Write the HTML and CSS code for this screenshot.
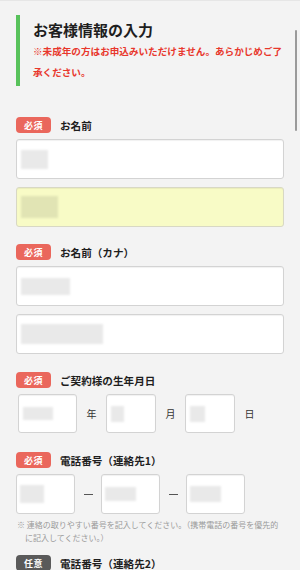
FILE: index.html
```html
<!DOCTYPE html>
<html lang="ja">
<head>
<meta charset="utf-8">
<link rel="stylesheet" href="styles.css">
</head>
<body>
<div class="page">
  <div class="intro">
    <h1 class="title">お客様情報の入力</h1>
    <p class="warn">※未成年の方はお申込みいただけません。あらかじめご了承ください。</p>
  </div>

  <div class="field field-first">
    <div class="field-head"><span class="badge">必須</span><span class="label">お名前</span></div>
    <div class="input"><span class="blur" style="width:27px;height:19px"></span></div>
    <div class="input input-filled"><span class="blur blur-yellow" style="width:37px;height:22px"></span></div>
  </div>

  <div class="field">
    <div class="field-head"><span class="badge">必須</span><span class="label">お名前（カナ）</span></div>
    <div class="input"><span class="blur" style="width:49px;height:17px"></span></div>
    <div class="input"><span class="blur" style="width:82px;height:20px"></span></div>
  </div>

  <div class="field field-date">
    <div class="field-head"><span class="badge">必須</span><span class="label">ご契約様の生年月日</span></div>
    <div class="row date-row">
      <div class="input box box-year"><span class="blur" style="width:30px;height:13px"></span></div>
      <span class="unit">年</span>
      <div class="input box box-md"><span class="blur" style="width:13px;height:16px"></span></div>
      <span class="unit">月</span>
      <div class="input box box-md"><span class="blur" style="width:15px;height:16px"></span></div>
      <span class="unit">日</span>
    </div>
  </div>

  <div class="field field-tel">
    <div class="field-head"><span class="badge">必須</span><span class="label">電話番号（連絡先1）</span></div>
    <div class="row tel-row">
      <div class="input box box-tel"><span class="blur" style="width:24px;height:18px"></span></div>
      <span class="dash"></span>
      <div class="input box box-tel"><span class="blur" style="width:31px;height:14px"></span></div>
      <span class="dash"></span>
      <div class="input box box-tel"><span class="blur" style="width:31px;height:16px"></span></div>
    </div>
    <p class="note">※ 連絡の取りやすい番号を記入してください。（携帯電話の番号を優先的に記入してください。）</p>
  </div>

  <div class="field field-last">
    <div class="field-head"><span class="badge badge-optional">任意</span><span class="label">電話番号（連絡先2）</span></div>
    <div class="row tel-row">
      <div class="input box box-tel"></div>
      <span class="dash"></span>
      <div class="input box box-tel"></div>
      <span class="dash"></span>
      <div class="input box box-tel"></div>
    </div>
  </div>
</div>
<div class="scrollbar"></div>
</body>
</html>
```

FILE: styles.css
```css
html, body {
  margin: 0;
  padding: 0;
}
body {
  background: #f3f3f3;
  font-family: "Noto Sans CJK JP", "Noto Sans", sans-serif;
  color: #222;
  border-top: 1px solid #e6e6e6;
}
.page {
  padding: 14px 16px 40px 16px;
}
.intro {
  border-left: 4px solid #58c25b;
  padding: 4px 0 3px 13px;
}
.title {
  margin: 0;
  font-size: 15px;
  line-height: 22px;
  font-weight: 700;
  color: #1e1e1e;
}
.warn {
  margin: 0;
  font-size: 9.6px;
  line-height: 21px;
  font-weight: 700;
  color: #e8372c;
}
.field {
  margin-top: 17px;
}
.field-first {
  margin-top: 31px;
}
.field-date {
  margin-top: 18px;
}
.field-tel {
  margin-top: 19px;
}
.field-last {
  margin-top: 11px;
}
.field-head {
  display: flex;
  align-items: center;
  gap: 9px;
  height: 16px;
  margin-bottom: 6px;
}
.badge {
  display: inline-flex;
  align-items: center;
  justify-content: center;
  width: 35px;
  height: 16px;
  border-radius: 4px;
  background: #ea675c;
  color: #fff;
  font-size: 9px;
  font-weight: 700;
  letter-spacing: 0.5px;
}
.badge-optional {
  background: #5a5a5a;
}
.label {
  font-size: 10.6px;
  font-weight: 700;
  color: #1e1e1e;
}
.input {
  box-sizing: border-box;
  height: 40px;
  background: #fff;
  border: 1px solid #d3d3d3;
  border-radius: 3px;
  box-shadow: inset 0 1px 1px rgba(0, 0, 0, 0.06);
  display: flex;
  align-items: center;
  padding-left: 4px;
}
.input + .input {
  margin-top: 8px;
}
.input-filled {
  background: #f8fbc6;
  border-color: #d8d8c4;
}
.blur {
  display: block;
  background: #e9e9e9;
  filter: blur(1px);
}
.blur-yellow {
  background: #e1e4b4;
}
.row {
  display: flex;
  align-items: center;
}
.date-row {
  padding-left: 2px;
}
.box-year {
  width: 59px;
  height: 39px;
}
.box-md {
  width: 50px;
  height: 39px;
}
.unit {
  width: 29px;
  text-align: center;
  font-size: 10px;
  color: #333;
}
.box-tel {
  width: 59px;
  padding-left: 3px;
}
.dash {
  width: 26px;
  display: flex;
  justify-content: center;
}
.dash::before {
  content: "";
  display: block;
  width: 9px;
  height: 1px;
  background: #555;
}
.note {
  margin: 4px 0 0 0;
  padding-left: 9px;
  text-indent: -8px;
  font-size: 8px;
  line-height: 13px;
  color: #9a9a9a;
}
.scrollbar {
  position: fixed;
  right: 3px;
  top: 30px;
  width: 2.5px;
  height: 101px;
  border-radius: 2px;
  background: #9a9a9a;
}
```
